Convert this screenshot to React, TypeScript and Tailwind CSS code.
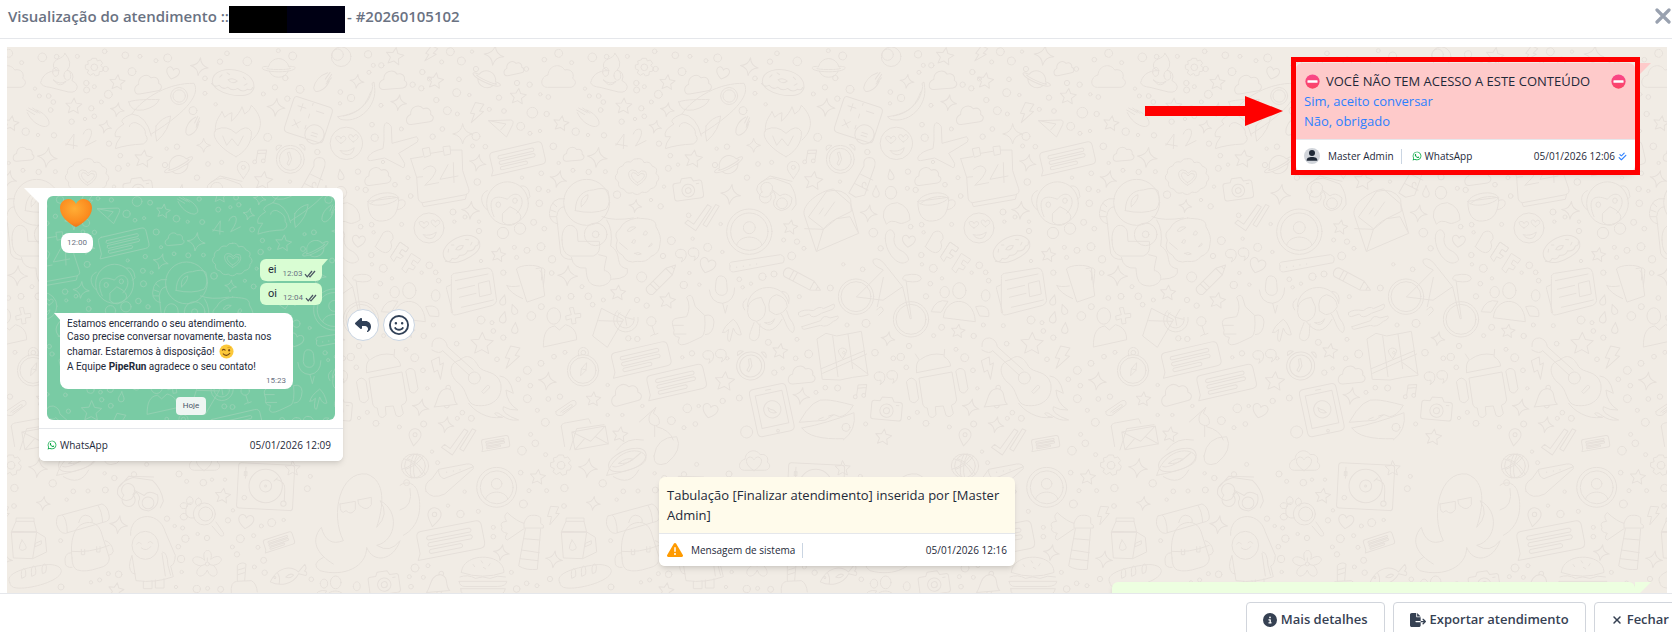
import { useState } from "react";
import type { ReactNode } from "react";
import { FaCheckDouble, FaCircleInfo, FaFileExport, FaRegFaceSmile, FaReply, FaTriangleExclamation, FaWhatsapp, FaXmark } from "react-icons/fa6";

// doodle wallpaper: small reusable outlines, centred on 0,0
const shapes = {
  star: "M0-25L7-10L24-8L11 4L15 20L0 12L-15 20L-11 4L-24-8L-7-10Z",
  sparkle: "M0-30Q4-4 30 0Q4 4 0 30Q-4 4-30 0Q-4-4 0-30Z",
  cloud: "M-35 32C-58 32-55 0-32-5C-30-35 5-42 18-20C38-25 48-8 42 5C58 15 48 32 35 32Z",
  heart: "M0 22C-32 2-25-19-11-19C-3-18 0-10 0-10C0-10 3-18 11-19C25-19 32 2 0 22Z",
  drop: "M0-18C3-8 10 0 10 7A10 10 0 0 1-10 7C-10 0-3-8 0-18Z",
  bolt: "M-8-30L18-28L8-6L20-6L-12 32L-6 4L-18 4Z",
  planet: "M-32-5A33 33 0 0 1 32-5M-30 10A33 33 0 0 0 30 10M-32-5C-66-8-60 12 0 12C60 12 66-8 32-5M-34 0C-50 2-20 5 0 5C20 5 50 2 34 0",
  bubble: "M-68-35H70Q84-35 84-21V21Q84 35 70 35H-88L-80 20V-21Q-80-35-68-35ZM-53-20H53Q60-15 53-10H-53Q-60-15-53-20ZM-53-3H53Q60 2 53 7H-53Q-60 2-53-3ZM-53 14H25Q32 19 25 24H-53Q-60 19-53 14Z",
  face: "M45 0A45 45 0 1 1-45 0A45 45 0 1 1 45 0ZM-15 0C-33-10-32-20-24-20Q-16-20-15-13Q-10-24-3-18C2-12-4-6-15 0ZM19-4C3-14 4-24 12-24Q18-24 19-17Q24-28 31-22C36-16 30-10 19-4ZM-17 20Q4 26 22 12Q18 32 2 32Q-12 31-17 20Z",
  donut: "M-60 5C-65-30-20-45 20-38C60-30 75 0 60 20C40 45-50 40-60 5ZM-62 10Q-50 22-38 12Q-25 26-12 14Q5 26 18 14Q35 26 48 12Q60 16 62 5M-14-8Q0-18 14-8Q0 6-14-8ZM-40-12L-34-20M-20-28L-12-24M30-22L38-16M36 2L44-4",
  comet: "M-32-22L-8-8M-26-28L0-14M-14-28L8-12M-30-14C-20 8 0 26 24 28Q42 24 32 6C26-6 10-18-2-22",
  camera: "M-38-22H-22L-16-34H14L20-22H38Q46-22 46-14V26Q46 34 38 34H-38Q-46 34-46 26V-14Q-46-22-38-22ZM20 6A20 20 0 1 1-20 6A20 20 0 1 1 20 6ZM9 6A9 9 0 1 1-9 6A9 9 0 1 1 9 6ZM28-12H36",
  badge: "M68 0A68 68 0 1 1-68 0A68 68 0 1 1 68 0ZM56 0A56 56 0 1 1-56 0A56 56 0 1 1 56 0ZM18-12A18 18 0 1 1-18-12A18 18 0 1 1 18-12ZM-38 40C-30 8 30 8 38 40",
  checks: "M-52 12L-42 4L-26 18L22-36L32-28L-22 38ZM2 22L46-34L56-28L12 30Z",
  quotes: "M-18-14A13 13 0 1 0-14 10Q-10 16-16 24Q2 14-2-4Q-6-15-18-14ZM20-18A13 13 0 1 0 24 6Q28 12 22 20Q40 10 36-8Q32-19 20-18Z",
  clock: "M42 0A42 42 0 1 1-42 0A42 42 0 1 1 42 0ZM33 0A33 33 0 1 1-33 0A33 33 0 1 1 33 0ZM-8-20L-2-22L4 0L-4 18L-10 14L-4 0ZM-42-28Q-48-46-26-42ZM28-44Q46-48 44-28Z",
  pencil: "M-52-14H30L58 0L30 14H-52Q-60 10-60 0Q-60-10-52-14ZM-36-14V14M-24-14V14M30-14V14M46-6V6",
  gear: "M-6-27H6L9-19L18-22L25-12L19-6L27 2L24 12L15 13L14 23L3 26L-2 18L-12 24L-21 17L-17 9L-27 4L-27-7L-18-9L-20-19L-10-22ZM10 0A10 10 0 1 1-10 0A10 10 0 1 1 10 0Z",
  note: "M-12 16A6 6 0 1 1-13 15V-18L14-24V8A6 6 0 1 1 13 7M-12-8L14-14",
  pin: "M0 26C-10 10-18 4-18-8A18 18 0 0 1 18-8C18 4 10 10 0 26ZM6-8A6 6 0 1 1-6-8A6 6 0 1 1 6-8Z",
  clip: "M-32 10L16-22Q30-26 28-10L-14 22Q-36 26-32 10ZM-18 12L12-10Q20-12 16-4L-12 14",
  bell: "M-6-30A7 7 0 1 1 6-30M-34 30C-24 14-32-28 0-30C26-28 16 2 34 12ZM-4 24Q6 34 12 18",
  flower: "M-8-12C-22-50 22-50 10-14C40-38 60-4 18 4C48 34 10 52 0 18C-18 56-50 26-18 6C-62 0-44-40-8-12ZM6 0A6 6 0 1 1-6 0A6 6 0 1 1 6 0ZM0-8V-18M8 2L18 4M-8 2L-18 5",
  people: "M14-56A20 24 0 1 1-26-56A20 24 0 1 1 14-56ZM-64-52A14 17 0 1 1-64-51ZM60-42A13 17 0 1 1 60-41ZM-54 24C-48-40 38-44 42 36ZM-90 6Q-76-34-40-24L-60 8ZM44-8C74-16 86 0 82 22L56 20Z",
  cup: "M-48-20C-50 20-30 42-4 38C30 36 44 10 44-32ZM-48-20C-40-46 30-58 44-32C30-10-40 0-48-20ZM46-24C70-34 72 0 40 4M-40-14C-20-34 20-40 40-32",
  burger: "M-58-4C-56-60 58-60 58-4Q0 16-58-4ZM-62 8Q-40 0-20 12Q0 4 20 12Q40 2 62 8M-64 20H66Q64 34 40 34H-48Q-64 34-64 20ZM-60 40H62Q58 60 30 60H-40Q-60 58-60 40ZM-26-26L-22-20M-4-36L0-30M20-28L16-22M2-18L8-14",
  bread: "M-76 20C-90-4-46-22 20-32C60-40 88-26 76-6C60 20-20 40-56 36Q-74 34-76 20ZM-40 6Q-44-20-34-22Q-26-22-28 0ZM-10 0Q-14-28-4-30Q4-30 2-6ZM22-8Q18-32 28-36Q38-34 32-12Z",
  milk: "M-40-24L-26-56H28L36-24ZM-26-56V-66H28V-56M-40-24L-34 54L24 56L36-24ZM36-24L62-8L66 36L24 56M-8 0C0 12 6 18 4 26Q-8 36-16 26Q-16 14-8 0ZM32 10L50 2V12L32 20Z",
  backpack: "M-50 60C-56 10-46-40-6-46C20-50 34-34 40-10L62 60Q62 84 30 90Q-10 104-34 96Q-50 90-50 60ZM-52 40Q0 46 62 22M-22 34V50H-12V34M24 26V42H34V26M-52 44Q-76 44-70 78Q-66 90-50 88M50 8Q70 14 74 40Q70 52 60 52M-92-66L40-102Q58-96 62-66Q64-54 54-50L-70-14Q-88-14-96-40Q-98-60-92-66ZM-78-68Q-66-60-64-16M28-98Q40-80 42-46M-30-46Q-22-76 0-66Q14-60 10-46",
  bear: "M-44-30C-50-96 40-110 60-40L90 30Q88 60 76 62L84 94Q30 114-28 106L-40 30Q-56 70-38 84L-30 86M40 0A40 42 0 1 1-40 0A40 42 0 1 1 40 0ZM-26-4Q-18-14-12-4M8-8Q16-16 22-6M-12 8Q4 20 16 4M52 20Q66 20 68 60L76 90M50 24L60 92M-6 108V130H20V106M30 104V128H56V100",
  tablet: "M-44-70H40Q54-70 54-56V60Q54 74 40 74H-44Q-58 74-58 60V-56Q-58-70-44-70ZM-42-50H40V50H-42ZM26 0A26 26 0 1 1-26 0A26 26 0 1 1 26 0ZM-8-60H8M4 62A4 4 0 1 1 3 62M-12-8Q-14 12 10 12L4 4L-4 0Z",
  turntable: "M-76-66H76Q84-66 84-58V62Q84 70 76 70H-76Q-84 70-84 62V-58Q-84-66-76-66ZM50 0A50 50 0 1 1-50 0A50 50 0 1 1 50 0ZM18 0A18 18 0 1 1-18 0A18 18 0 1 1 18 0ZM3 0A3 3 0 1 1-3 0A3 3 0 1 1 3 0ZM30-22Q60-16 58 10V44M24-16L34-26M-62-54V-20M-66-40H-58V-28H-66ZM64 50A8 8 0 1 1 48 50A8 8 0 1 1 64 50Z",
  fish: "M-56 16C-30-24 10-26 32-2L54-22Q60-8 50-2Q62 4 52 12L32 4C10 34-30 34-56 16ZM-30-6Q-24 8-30 24M-40 2A3 3 0 1 1-41 2M-8 8Q8-4 16 6Q4 16-8 8Z",
  hotdog: "M-110 20C-120-30-20-66 40-56C90-50 100-10 60 20C20 50-90 60-110 20ZM-90 14C-60 30 20 0 60-30",
  basketball: "M36 0A36 36 0 1 1-36 0A36 36 0 1 1 36 0ZM-28-22Q10-10 26 26M-34 10Q0 0 20-30M-6 36Q-16 0 2-36",
  mail: "M-60-30H60V34H-60ZM-60-30L0 14L60-30M-60 34L-18 0M60 34L18 0",
  letter: "M-78 0C-84-30-30-70 10-75L62-30L86 58L-40 112ZM-64 8L-10-68Q40-80 62-44L64-8L20 14Q-10 30-18 44ZM-76 44L-20 46L20 14L60 8L86 58M-20 46L-40 112M-32 0L-20-18M-16 6L14-36",
  map: "M-76-50L-50-66L-18-58L56-72L76 60L30 66L-8 74L-60 72ZM-30-58L-14 64M16-64L30 40M-64 40L66-14M-60 54L72-4M30 22L76 56M0 10C-8-2-14-8-12-16Q-2-28 12-16Q12-6 0 10ZM4-12A4 4 0 1 1 3-12",
  keypad: "M-60-62H50Q66-62 66-46V50Q66 62 50 62H-56Q-70 62-70 46V-50Q-70-62-60-62ZM-36-46V-20M-50-34H-22M14-36H40M-48 14L-26 36M-26 14L-48 36M-4-62V-50M-4-20V-6M-4 20V32M64 40A32 32 0 1 1 0 40A32 32 0 1 1 64 40ZM22 36H42M22 46H42",
  sunglasses: "M-10-46Q-60-40-60-10Q-50 18-26 10L-10-6Q2 12-8 20Q-16 44 14 52Q46 46 46 14Q26-6 10 8L-14-12M-10-46L40-28Q60 0 58 34L46 50M-44-4A18 18 0 1 1-20 0A18 18 0 1 1-44-4ZM0 32A16 16 0 1 1 32 28A16 16 0 1 1 0 32ZM-50-30L-20-52L46-36",
  tube: "M-20 60L-42 50L-8-36Q-16-60 4-64Q26-66 24-40L6 50ZM-28 20L14 34M-14-10L24 2M-4 26A6 8 0 1 1 6 20",
  octopus: "M-40 90C-90 60-110 20-76-20Q-60 40-10 20C-50-60-20-190 60-180C120-160 110-80 90-20Q130-60 100-100C160-70 150 20 90 34Q130 60 160 20C140 80 80 90 60 40C60 100-10 130-80 110Q-110 90-70 70M-20-90L26-98V-74Q14-54-2-70Q-20-54-20-90ZM34-102L74-110V-88Q62-68 44-82Q34-86 34-102Z",
  plane: "M-30-10C-30-40-32-56-24-62Q-14-62-8-50L-6 0L68-20Q76-12 70-4L14 30L32 60Q32 80 22 70L-28 44L-70 52Q-84 52-76 38Q-66 24-34 16Z",
};

type Shape = keyof typeof shapes;

// name, x, y, scale, rotation
const doodles: [Shape, number, number, number, number][] = [
  ["bolt", 92, 42, 0.8, 20], ["sparkle", 282, 46, 1, 8], ["cloud", 340, 84, 0.6, -12], ["planet", 260, 118, 0.85, 24], ["star", 106, 123, 1, 8],
  ["star", 354, 170, 1, 6], ["cloud", 476, 110, 1, 0], ["gear", 733, 82, 1, 0], ["star", 802, 128, 0.95, 5], ["star", 671, 199, 1, 3],
  ["cloud", 892, 132, 0.8, -10], ["heart", 968, 99, 0.85, 15], ["sparkle", 1048, 80, 0.9, 8], ["donut", 1147, 129, 1, 8], ["planet", 1286, 84, 0.95, 0],
  ["comet", 1418, 124, 0.9, 95], ["keypad", 1377, 240, 0.9, 18], ["sparkle", 1278, 202, 0.9, 6], ["cloud", 58, 224, 0.8, -8], ["bolt", 230, 218, 1, 8],
  ["star", 483, 251, 0.95, 10], ["comet", 562, 232, 1, 0], ["sparkle", 188, 282, 1, 0], ["sparkle", 802, 209, 0.7, 10], ["sparkle", 766, 260, 0.65, 15],
  ["bubble", 351, 355, 0.98, -13], ["cloud", 520, 342, 0.62, -5], ["sparkle", 592, 352, 1, 8], ["sparkle", 233, 368, 0.85, 12], ["sparkle", 475, 417, 0.85, 15],
  ["star", 880, 357, 1.1, 8], ["planet", 986, 374, 0.9, -28], ["sparkle", 1061, 316, 0.7, 0], ["comet", 1028, 256, 0.8, 85], ["note", 1233, 350, 0.95, 10],
  ["clock", 1321, 358, 1, 0], ["face", 1489, 310, 1.08, 0], ["pin", 1180, 390, 1, 0], ["star", 1240, 423, 1.15, 8], ["tube", 1395, 415, 1, 8],
  ["camera", 864, 446, 0.95, -8], ["sparkle", 992, 463, 1, 8], ["sunglasses", 1130, 460, 1, 0], ["letter", 1290, 522, 1, 0], ["face", 87, 564, 1, 0],
  ["sparkle", 212, 511, 0.9, 5], ["donut", 182, 629, 0.92, -28], ["star", 295, 645, 0.9, 10], ["sparkle", 706, 498, 0.65, 8], ["checks", 905, 532, 1, -6],
  ["badge", 1048, 575, 1, 0], ["star", 1171, 562, 0.9, 10], ["sparkle", 1406, 520, 0.85, 8], ["quotes", 860, 642, 1, 0], ["heart", 922, 676, 1.05, 18],
  ["pencil", 786, 716, 1, -45], ["pencil", 1208, 722, 1.05, 28], ["sparkle", 503, 707, 1, 3], ["star", 654, 759, 0.95, 5], ["star", 802, 782, 1, 10],
  ["drop", 310, 780, 0.9, 15], ["drop", 342, 808, 0.9, -20], ["drop", 310, 832, 1, 15], ["drop", 345, 864, 0.95, 5], ["star", 246, 912, 1.4, 2],
  ["bolt", 336, 952, 1.1, 8], ["bolt", 116, 984, 1, -30], ["bubble", 722, 958, 1.05, -13], ["bubble", 828, 1026, 1.05, -13], ["quotes", 942, 946, 1, 0],
  ["clock", 1052, 978, 1, 5], ["star", 1140, 934, 0.95, 8], ["map", 1328, 946, 1, 0], ["sparkle", 1464, 896, 0.7, 10], ["cloud", 1204, 1004, 0.8, -5],
  ["star", 974, 1025, 1.2, 5], ["cloud", 676, 1062, 0.9, -15], ["sparkle", 442, 1023, 0.9, 8], ["clip", 500, 1104, 1, 0], ["star", 580, 1078, 0.9, 5],
  ["heart", 930, 1112, 1, 15], ["sparkle", 1204, 1068, 0.85, 10], ["tablet", 1117, 1108, 1, -12], ["note", 1384, 1054, 0.95, 8], ["camera", 1460, 1106, 1, 5],
  ["quotes", 1456, 1010, 1, 0], ["bell", 140, 1076, 1, 8], ["sparkle", 62, 1102, 0.85, 12], ["sparkle", 138, 1154, 0.8, 12], ["star", 660, 1184, 0.95, 8],
  ["people", 1684, 808, 1, 0], ["cup", 1602, 505, 1, 0], ["plane", 1632, 310, 1, 0], ["cloud", 1628, 120, 0.82, -5], ["star", 1634, 50, 1.1, 10],
  ["sparkle", 1521, 124, 0.7, 8], ["sparkle", 1646, 188, 0.8, 8], ["cloud", 1582, 408, 0.78, -8], ["drop", 1472, 404, 0.9, -10], ["star", 1674, 874, 0.85, 8],
  ["heart", 1526, 603, 0.85, 8], ["drop", 1428, 455, 1, 0], ["badge", 290, 1342, 0.88, 0], ["checks", 175, 1205, 1, -6], ["basketball", 50, 1278, 1, 0],
  ["pin", 44, 1192, 1, 8], ["gear", 483, 1276, 1.15, 0], ["star", 413, 1312, 0.95, 6], ["sparkle", 564, 1284, 0.95, 8], ["bubble", 286, 1210, 0.5, -10],
  ["mail", 570, 1192, 0.85, -10], ["pin", 102, 1432, 1.1, 10], ["bubble", 150, 1500, 1.2, -11], ["sparkle", 304, 1538, 0.8, 10], ["sparkle", 462, 1558, 0.85, 8],
  ["bolt", 460, 1426, 0.9, 0], ["burger", 248, 1602, 1.1, 0], ["bell", 118, 1634, 1, 10], ["bread", 555, 1608, 1, 0], ["milk", 524, 1500, 1, 0],
  ["backpack", 716, 1494, 1, 0], ["bear", 886, 1516, 1, 0], ["flower", 1072, 1572, 1, 0], ["turntable", 1247, 1338, 1, 3], ["star", 1328, 1286, 0.95, 0],
  ["star", 1118, 1368, 0.95, 8], ["heart", 1188, 1444, 1, 8], ["bubble", 1286, 1506, 0.55, -18], ["fish", 1314, 1602, 1, -8], ["octopus", 1490, 1482, 1, 0],
  ["sunglasses", 870, 1360, 1.1, -12], ["sparkle", 806, 1454, 0.9, 8], ["sparkle", 580, 1390, 0.7, 8], ["camera", 1602, 1628, 1, -8], ["people", 1462, 1672, 0.8, 0],
  ["star", 798, 1652, 0.95, 10], ["hotdog", 690, 1262, 0.6, -10], ["basketball", 1690, 1278, 1, 0], ["heart", 1062, 1270, 1, 0],
  ["cloud", 1064, 1262, 0.9, 0], ["star", 1450, 1192, 1, 8],
];

// x, y, r
const dots = [
  [151, 35, 12], [216, 35, 5], [184, 63, 12], [228, 87, 8], [125, 66, 6], [67, 96, 8], [88, 117, 6], [38, 134, 8], [64, 145, 8], [177, 118, 7], [170, 158, 12], [208, 165, 5],
  [109, 180, 8], [142, 212, 12], [172, 222, 6], [268, 208, 6], [312, 213, 7], [351, 129, 8], [389, 134, 8], [379, 87, 7], [297, 173, 8], [397, 218, 16], [440, 222, 8], [421, 163, 5],
  [445, 171, 7], [433, 59, 7], [476, 40, 12], [515, 68, 6], [577, 52, 13], [620, 50, 7], [682, 49, 6], [764, 34, 7], [826, 46, 10], [870, 49, 6], [767, 87, 8], [846, 95, 12],
  [953, 54, 12], [918, 62, 6], [709, 129, 8], [710, 150, 9], [733, 140, 6], [775, 163, 12], [555, 146, 5], [568, 168, 6], [596, 168, 7], [610, 186, 7], [602, 210, 7], [724, 205, 8],
  [754, 186, 6], [665, 245, 8], [705, 237, 5], [733, 229, 7], [612, 286, 8], [564, 285, 5], [527, 275, 11], [362, 259, 12], [390, 280, 6], [420, 273, 5], [127, 267, 7], [98, 290, 8],
  [228, 289, 12], [218, 318, 6], [256, 320, 7], [4, 267, 6], [460, 319, 10], [476, 369, 5], [519, 391, 6], [566, 396, 8], [616, 395, 6], [366, 413, 5], [424, 400, 7], [232, 426, 10],
  [416, 447, 8], [445, 453, 5], [24, 413, 6], [32, 468, 7], [159, 516, 9], [195, 531, 6], [163, 545, 5], [237, 545, 5], [237, 573, 8], [418, 490, 10], [401, 547, 9], [433, 566, 7],
  [343, 622, 6], [381, 631, 9], [423, 620, 12], [350, 652, 6], [456, 658, 11], [243, 663, 5], [88, 676, 10], [65, 698, 5], [107, 697, 7], [116, 722, 7], [5, 553, 6], [310, 698, 8],
  [455, 699, 7], [546, 740, 6], [475, 774, 7], [513, 769, 9], [565, 769, 10], [578, 794, 7], [610, 780, 6], [424, 800, 9], [394, 828, 13], [1131, 40, 7], [1192, 64, 13], [1285, 32, 6],
  [1328, 48, 12], [1110, 65, 8], [1065, 115, 7], [1065, 160, 6], [1029, 212, 12], [1097, 193, 5], [1240, 162, 6], [1275, 142, 8], [1306, 114, 8], [1350, 148, 12], [1312, 176, 8], [1253, 292, 12],
  [950, 326, 5], [981, 320, 8], [945, 375, 8], [811, 347, 7], [777, 311, 8], [834, 374, 5], [805, 385, 9], [792, 440, 5], [651, 464, 11], [782, 499, 8], [753, 480, 5], [866, 526, 7],
  [814, 602, 12], [789, 648, 8], [878, 596, 5], [962, 552, 5], [967, 636, 5], [923, 622, 12], [851, 735, 11], [898, 734, 5], [868, 699, 5], [725, 711, 15], [740, 797, 8], [711, 780, 8],
  [1018, 718, 7], [1053, 731, 5], [1028, 742, 5], [1087, 710, 11], [1122, 702, 9], [1175, 648, 12], [1212, 625, 6], [1191, 605, 8], [1151, 600, 6], [1041, 413, 8], [1074, 372, 7], [1115, 367, 6],
  [1402, 336, 8], [1320, 425, 5], [1420, 578, 13], [1442, 625, 8], [1388, 688, 7], [1330, 673, 5], [1291, 744, 9], [1198, 770, 6], [1105, 907, 9], [1191, 898, 6], [1187, 955, 7], [1226, 942, 12],
  [1123, 998, 8], [1148, 985, 5], [1425, 938, 10], [1480, 955, 7], [1341, 855, 6], [1398, 850, 12], [982, 955, 5], [876, 940, 8], [847, 952, 5], [685, 895, 8], [712, 897, 8], [623, 1035, 5],
  [423, 970, 9], [462, 950, 7], [495, 937, 6], [382, 991, 12], [355, 1018, 7], [391, 1037, 7], [382, 1076, 12], [412, 1111, 6], [480, 1070, 8], [445, 1077, 7], [436, 1147, 12], [291, 958, 7],
  [170, 911, 7], [71, 888, 8], [44, 953, 12], [69, 991, 7], [18, 928, 6], [82, 1045, 5], [100, 855, 6], [160, 857, 6], [243, 840, 12], [276, 848, 6], [280, 873, 7], [310, 893, 8],
  [187, 1118, 7], [214, 1135, 9], [172, 1135, 6], [71, 1152, 9], [814, 1142, 12], [862, 1105, 13], [896, 1098, 5], [968, 1083, 8], [1018, 1074, 9], [727, 1098, 5], [852, 1163, 6], [886, 1152, 7],
  [623, 1125, 5], [667, 1125, 5], [1248, 1057, 6], [1276, 1043, 7], [1313, 1044, 9], [1397, 1152, 6], [1338, 1162, 12], [1040, 1176, 18], [1554, 43, 11], [1570, 76, 6], [1557, 97, 6], [1471, 156, 7],
  [1503, 174, 11], [1470, 190, 5], [1593, 196, 6], [1566, 254, 7], [1574, 293, 11], [1599, 366, 5], [1524, 395, 8], [1522, 445, 6], [1547, 450, 8], [1635, 434, 7], [1532, 560, 7], [1565, 554, 7],
  [1571, 577, 5], [1564, 645, 8], [1566, 673, 5], [1600, 685, 12], [1626, 715, 5], [1591, 731, 7], [1578, 769, 8], [1625, 862, 9], [1601, 887, 6], [1527, 918, 8], [1502, 951, 11], [1519, 982, 7],
  [1552, 1117, 6], [1578, 1150, 9], [1527, 1134, 5], [1648, 1161, 6], [1594, 76, 8], [366, 1232, 13], [406, 1210, 10], [362, 1298, 7], [437, 1244, 6], [392, 1183, 6], [113, 1268, 6], [96, 1235, 5],
  [370, 1392, 12], [387, 1352, 6], [440, 1352, 6], [493, 1344, 11], [608, 1330, 11], [492, 1398, 7], [235, 1414, 6], [181, 1422, 11], [144, 1397, 5], [194, 1355, 5], [20, 1328, 9], [280, 1462, 6],
  [280, 1490, 7], [45, 1584, 12], [84, 1577, 6], [28, 1610, 6], [70, 1612, 6], [33, 1640, 7], [334, 1597, 6], [350, 1647, 10], [380, 1630, 7], [411, 1637, 6], [450, 1617, 8], [764, 1300, 5],
  [793, 1314, 8], [852, 1303, 8], [987, 1302, 9], [890, 1273, 6], [1010, 1324, 6], [1060, 1328, 10], [1086, 1319, 5], [1125, 1319, 5], [1149, 1411, 5], [1134, 1441, 8], [951, 1436, 8], [974, 1458, 5],
  [998, 1464, 6], [1006, 1496, 11], [1043, 1482, 5], [1071, 1494, 8], [985, 1520, 7], [993, 1557, 11], [995, 1596, 5], [1171, 1496, 12], [1147, 1521, 6], [1161, 1543, 8], [1211, 1487, 6], [1265, 1448, 12],
  [1234, 1458, 6], [1301, 1440, 5], [1224, 1522, 6], [1241, 1561, 9], [1244, 1598, 8], [1213, 1581, 6], [1183, 1373, 7], [1372, 1346, 9], [1381, 1309, 6], [1384, 1618, 7], [1040, 1647, 11], [1073, 1645, 6],
  [1112, 1648, 9], [978, 1641, 5], [806, 1603, 10], [775, 1601, 6], [749, 1620, 6], [723, 1627, 5], [633, 1641, 9], [632, 1502, 6], [766, 1350, 9], [714, 1353, 6], [670, 1354, 7], [650, 1379, 5],
];

// one-off drawings, already in wallpaper coordinates
const scenes = [
  // poop
  "M645 40C640 60 610 52 610 78Q612 90 628 92C590 90 576 110 572 128Q576 140 600 142L655 156Q680 160 682 140Q680 128 666 122Q676 98 652 90Q670 70 645 40ZM608 98A9 13 0 1 0 626 94A9 13 0 1 0 608 98ZM642 108A9 13 0 1 0 662 104A9 13 0 1 0 642 108ZM610 120Q630 136 648 124Q640 136 626 134Z",
  // rocket
  "M846 222C880 170 960 128 1032 130C1050 160 1020 210 904 282M1013 168A25 25 0 1 1 962 168A25 25 0 1 1 1013 168ZM1006 168A18 18 0 1 1 969 168A18 18 0 1 1 1006 168ZM836 186C860 176 900 180 928 178Q920 200 880 210Q842 216 836 186ZM918 258Q936 232 962 228Q958 270 920 304Q914 284 918 258ZM846 222Q890 226 904 288M846 222Q800 240 822 252Q790 270 796 290H812Q796 310 796 326Q830 314 880 312Q900 300 886 284Q890 262 858 248Q840 246 838 260",
  // paper plane and 42
  "M266 242L332 240Q342 240 338 254L320 290ZM266 242L318 252L302 270M648 316L672 282L670 326M646 312L682 318M700 282Q706 264 722 268Q732 282 706 318L738 302",
  // heart on fire
  "M1158 350C1100 320 1080 280 1100 268Q1130 254 1158 280Q1190 250 1204 274C1208 310 1180 340 1158 350ZM1096 274C1094 240 1110 230 1116 214L1124 232Q1136 220 1146 218L1144 244Q1170 220 1176 200L1184 222Q1202 212 1204 196C1240 230 1240 270 1206 300M1118 288L1130 316L1146 296L1164 318L1180 288",
  // calendar
  "M32 356L68 350M92 340L128 334M152 330L186 330L188 392L206 446Q210 460 198 464L68 488Q54 486 54 470L50 412L32 356M68 326L88 322L92 346L74 352ZM130 320L150 318L152 342L134 346ZM50 412L68 410M66 488L70 500L196 478L200 462M70 388Q96 366 108 390Q104 410 74 436L116 428M144 374L120 418L174 408M160 368L162 428",
  // monkey
  "M385 490A62 64 0 1 1 260 490A62 64 0 1 1 385 490ZM262 452C240 460 238 490 262 510M362 438Q386 432 390 470L382 478M282 530C260 480 280 460 322 478C350 440 390 480 350 520M302 494A7 8 0 1 1 288 494A7 8 0 1 1 302 494ZM352 482A7 8 0 1 1 338 482A7 8 0 1 1 352 482ZM308 520L330 500Q372 520 360 540Q330 570 308 546ZM326 579A17 17 0 1 1 292 579A17 17 0 1 1 326 579ZM377 566A17 17 0 1 1 343 566A17 17 0 1 1 377 566Z",
  // astronaut
  "M629 487A69 69 0 1 1 491 487A69 69 0 1 1 629 487ZM526 512C526 470 550 450 580 450Q610 440 624 452Q634 490 618 508Q580 524 526 512ZM544 500C540 480 550 468 564 464Q566 480 544 500ZM494 476Q452 470 448 520Q450 548 474 552M494 500Q474 500 470 530L482 640Q490 660 516 658M486 600C484 540 530 550 532 578L534 604H598Q604 640 580 648H510Q486 640 486 600ZM621 583A34 34 0 1 1 553 583A34 34 0 1 1 621 583ZM597 583A10 10 0 1 1 577 583A10 10 0 1 1 597 583ZM514 652Q520 688 558 684C560 720 566 738 600 738C640 734 640 700 616 692Q608 700 620 650L596 644M620 540Q640 570 632 618C670 640 640 680 682 686Q690 716 634 718M606 530Q640 544 700 534M459 490L470 500M452 510L468 516M450 530L468 530",
  // cookie
  "M712 534C740 538 770 534 768 560Q786 590 780 610Q780 640 752 650Q740 668 712 664Q680 672 668 646Q640 632 652 600Q640 580 660 566Q670 540 712 534ZM682 572Q690 556 708 562L690 574ZM730 584Q734 566 742 576Q742 590 730 584ZM696 608Q700 594 706 600Q706 616 696 608ZM658 608L682 628M746 620Q758 602 756 614ZM704 640Q716 634 724 642Q712 648 704 640Z",
  // rosette
  "M712 356Q728 354 732 368Q750 362 756 378Q776 384 768 400Q784 414 770 426Q770 444 752 446Q742 462 726 456Q712 470 698 458Q680 464 672 448Q652 444 656 426Q638 414 652 400Q650 382 668 378Q674 362 692 366Q700 354 712 356ZM712 436C680 418 680 390 698 390Q710 390 714 400Q724 388 736 394C746 410 732 426 712 436ZM712 428C692 414 690 400 700 398Q710 398 714 408Q722 396 732 402C736 412 726 420 712 428Z",
  // BFF, newspaper, jug
  "M1576 620L1600 578Q1618 566 1628 584Q1634 596 1622 606Q1630 624 1614 636Q1600 644 1576 620ZM1622 650L1650 606L1676 624L1668 636L1656 628L1648 640L1660 648",
  "M-28 650L0 606L26 624L18 636L6 628L-2 640L10 648L2 656L-10 650L-18 664ZM6 686L34 640L62 658L54 670L40 660L34 672L46 680L40 690L26 684L18 698Z",
  "M154 714Q152 702 164 700L264 684Q276 686 278 698L290 782Q288 792 278 796L170 824Q158 828 154 816ZM154 734L140 740Q138 742 140 748L158 818M166 722L264 702M172 748L224 736M178 772L228 760M184 802L280 780M236 730L268 722L274 762L240 770Z",
  "M350 686C360 674 410 672 424 684L434 768L382 786ZM408 686Q440 676 434 700L430 740M420 692Q428 692 424 720M358 738Q330 742 320 736Q330 760 368 776",
  // drink, person, compass
  "M604 806L578 888L622 922L670 840ZM596 842L666 844M714 832A37 37 0 1 1 652 812M702 832A26 26 0 1 1 660 818M676 832L654 818M676 832L690 808M676 832L700 838M676 832L680 856M768 844A14 14 0 1 1 740 844A14 14 0 1 1 768 844ZM756 858L764 882L752 888M764 884L774 880",
  "M482 828A20 24 0 1 1 441 828A20 24 0 1 1 482 828ZM430 920C430 880 440 862 464 858L478 870L496 854C520 860 530 876 530 898ZM498 828L514 824L508 804L520 802L524 822L542 820L542 832L526 834L528 850L516 852L514 836L500 840Z",
  "M596 991A47 47 0 1 1 502 991A47 47 0 1 1 596 991ZM588 991A39 39 0 1 1 510 991A39 39 0 1 1 588 991ZM542 1006L544 986L560 968L558 990ZM544 986L558 990M536 948Q530 924 550 922Q570 926 564 946M557 938A7 7 0 1 1 543 938A7 7 0 1 1 557 938Z",
  // mic, password field, shy monkey
  "M948 724Q950 706 964 708Q980 710 980 728L982 750Q980 766 966 766Q948 766 946 748ZM928 750Q932 788 968 790Q1004 784 1004 744M968 790L976 820L982 796M990 678Q984 668 996 666L1142 644Q1158 650 1150 668L1000 696Q986 696 990 678ZM1010 681V683M1030 678V680M1050 674V676M1070 671V673",
  "M1042 800C1044 730 1150 720 1166 790M1040 776Q1020 790 1034 810M1146 754Q1174 756 1166 790M1044 800Q1036 840 1070 844Q1100 836 1096 800L1084 772Q1050 776 1044 800ZM1108 812Q1100 770 1130 764Q1160 772 1162 800Q1150 822 1128 824ZM1062 848C1050 880 1038 900 1064 902C1084 896 1076 870 1080 852M1144 822C1156 840 1160 870 1178 878Q1192 864 1168 834L1160 812M1070 846Q1110 900 1146 838M1094 848Q1116 850 1124 836Q1116 864 1094 848Z",
  // thumb, arrow, sliders
  "M818 856Q812 836 834 834L860 830Q874 800 860 772Q874 756 880 780L886 800L914 826Q918 880 906 890L868 908Q838 922 834 906L838 892Q816 890 822 872ZM818 856H850M822 882H858M916 826Q940 820 942 846Q940 884 916 884M968 878Q970 860 1000 838Q1016 850 1024 884Q1010 890 1000 864L990 904Q978 908 986 868Q976 880 968 878Z",
  "M1196 818Q1210 806 1240 812Q1260 796 1270 806L1302 792Q1308 800 1298 808L1264 820Q1236 840 1228 822L1204 830Q1192 828 1196 818ZM1206 860L1262 842Q1270 822 1290 834L1314 828Q1318 838 1300 844Q1280 864 1262 856L1212 868Q1204 868 1206 860Z",
  // bicycle
  "M1421 770A53 53 0 1 1 1315 770A53 53 0 1 1 1421 770ZM1413 770A45 45 0 1 1 1323 770A45 45 0 1 1 1413 770ZM1586 838A53 53 0 1 1 1480 838A53 53 0 1 1 1586 838ZM1578 838A45 45 0 1 1 1488 838A45 45 0 1 1 1578 838ZM1370 770L1450 690Q1412 674 1420 658Q1440 650 1460 680L1508 740L1450 780ZM1432 800L1450 712M1508 740L1530 836L1534 836L1518 720Q1500 722 1514 706Q1560 696 1564 716Q1560 730 1520 724M1430 810Q1446 790 1450 812L1436 826",
  // phone receiver, robot, guitar
  "M1456 596C1454 566 1480 560 1484 586Q1476 610 1496 628Q1524 640 1526 660C1500 690 1456 640 1456 596ZM1450 530Q1448 490 1492 488Q1530 500 1530 540Q1510 552 1500 550Q1470 536 1460 552ZM1490 458A17 19 0 1 1 1456 458A17 19 0 1 1 1490 458Z",
  "M1550 998Q1546 970 1558 960L1546 942M1550 998L1652 978Q1650 960 1632 950L1634 928M1630 944Q1590 936 1562 958M1558 1014L1656 996L1670 1080Q1668 1092 1654 1096L1660 1120Q1650 1136 1638 1126L1630 1098L1606 1100L1608 1124Q1598 1140 1586 1126L1582 1104Q1570 1104 1568 1090ZM1520 1024Q1534 1004 1548 1024L1556 1076Q1544 1098 1530 1082ZM18 992Q30 978 44 992L54 1046Q44 1068 30 1054Z",
  "M96 920Q94 892 120 894Q140 900 142 920L220 990M96 930Q120 944 128 932L208 1006M241 1014A18 18 0 1 1 205 1014A18 18 0 1 1 241 1014ZM180 960C140 970 150 1010 176 1030C204 1050 196 1090 226 1096C280 1104 310 1070 302 1030C290 990 250 1000 236 980C220 950 200 940 180 960ZM246 1054L262 1036Q272 1036 268 1044L252 1060ZM300 1008Q330 1010 340 1060L318 1050Q320 1090 354 1110Q330 1112 310 1100Q300 1120 356 1140C310 1146 300 1110 284 1120Q290 1132 308 1132C260 1140 220 1110 206 1090",
  // lips, lamp, banana
  "M1198 1146Q1240 1070 1280 1080Q1300 1080 1360 1096Q1340 1130 1318 1130L1302 1124L1276 1140ZM1206 1164Q1280 1150 1362 1118Q1370 1170 1330 1200M1206 1164Q1230 1200 1330 1196M1256 1138L1270 1132M1286 1128L1300 1124",
  "M718 1146L768 1102L760 1120Q780 1130 778 1150Q770 1164 750 1150Q740 1130 760 1110M764 1156V1190M770 1160Q810 1170 820 1200",
  "M1464 230C1530 220 1560 190 1568 140L1566 130L1572 126L1574 142C1580 190 1540 240 1490 240Q1464 240 1464 230ZM1480 228C1530 220 1550 190 1562 156",
  // donut eye, lighthouse, hand, sneaker
  "M1503 50A29 29 0 1 1 1444 50A29 29 0 1 1 1503 50ZM1480 44A17 17 0 1 1 1446 44A17 17 0 1 1 1480 44Z",
  "M372 1450Q380 1426 394 1426Q416 1424 422 1434V1450L430 1456V1464H372V1456ZM376 1466L356 1578Q380 1592 412 1588L422 1466M370 1496L420 1500M364 1530L418 1538M360 1556L414 1562M372 1466L322 1500Q310 1496 322 1480Q300 1476 306 1462Q296 1446 320 1444Q308 1426 322 1418Q350 1444 372 1450",
  "M78 1354Q70 1330 96 1316L116 1288L200 1272Q222 1270 220 1286L134 1362Q96 1380 78 1354ZM116 1288Q114 1310 132 1316L220 1280M140 1296V1298M160 1292V1294M180 1288V1290",
  "M0 1336C20 1320 48 1330 54 1360C66 1400 60 1460 10 1486M0 1410Q40 1400 30 1346",
  // propeller hat, paw and lens
  "M620 1306C640 1240 700 1220 730 1240C760 1270 700 1290 620 1306ZM650 1230Q680 1190 730 1200M762 1248Q770 1190 830 1190Q850 1230 800 1270Q760 1284 762 1248ZM640 1310Q690 1340 716 1290M656 1270Q680 1250 700 1258Q680 1274 656 1270Z",
  "M1096 1422A33 33 0 1 1 1030 1422A33 33 0 1 1 1096 1422ZM1088 1422A20 20 0 1 1 1046 1422A20 20 0 1 1 1088 1422ZM1086 1458L1112 1488Q1124 1490 1120 1478L1098 1446M1024 1388Q1004 1388 1008 1426Q1020 1438 1034 1434M1002 1388A11 9 0 1 1 1001 1388ZM1020 1370A10 12 0 1 1 1019 1370ZM1046 1374A9 12 0 1 1 1045 1374ZM1002 1420A11 10 0 1 1 1001 1420Z",
  // cake with candle, carton
  "M1144 1660Q1140 1626 1160 1624L1204 1622Q1220 1630 1222 1656M1162 1624V1576Q1176 1564 1188 1572L1184 1622M1164 1590L1184 1584M1164 1604L1184 1598M484 1164Q480 1150 500 1148L566 1136L572 1150M484 1160L494 1220M510 1230L530 1166L612 1154",
];

function Wallpaper() {
  return (
    <svg className="absolute inset-0 h-full w-full" aria-hidden="true">
      <defs>
        <g id="doodles" fill="none" stroke="#e6e0da" strokeLinejoin="round" strokeLinecap="round">
          {doodles.map(([name, x, y, s, r], i) => (
            <path key={i} d={shapes[name]} transform={`translate(${x} ${y}) rotate(${r}) scale(${s})`} strokeWidth={3 / s} />
          ))}
          {dots.map(([x, y, r], i) => (
            <circle key={i} cx={x} cy={y} r={r} strokeWidth={3} />
          ))}
          {scenes.map((d, i) => (
            <path key={i} d={d} strokeWidth={3} />
          ))}
        </g>
        <pattern id="wallpaper" patternUnits="userSpaceOnUse" width="550" height="560" patternTransform="translate(393 -7)">
          <g transform="scale(0.33333)">
            <use href="#doodles" />
            <use href="#doodles" x="-1650" />
            <use href="#doodles" x="1650" />
          </g>
        </pattern>
      </defs>
      <rect width="100%" height="100%" fill="url(#wallpaper)" />
    </svg>
  );
}

function NoEntry() {
  return (
    <svg viewBox="0 0 16 16" className="mx-px inline-block size-[15px] shrink-0" role="img" aria-label="Proibido">
      <defs>
        <linearGradient id="noEntry" x1="0" y1="0" x2="0" y2="1">
          <stop offset="0" stopColor="#f9468c" />
          <stop offset="1" stopColor="#fb4463" />
        </linearGradient>
      </defs>
      <circle cx="8" cy="8" r="7.6" fill="url(#noEntry)" />
      <rect x="2.6" y="6.6" width="10.8" height="2.8" rx="0.6" fill="#fff" />
    </svg>
  );
}

function Avatar() {
  return (
    <svg viewBox="0 0 16 16" className="size-4 shrink-0" aria-hidden="true">
      <circle cx="8" cy="8" r="8" fill="#d1d5db" />
      <circle cx="8" cy="5" r="3" fill="#1f2937" />
      <path d="M2.6 12.8C2.6 9.8 4.6 8.9 8 8.9S13.4 9.8 13.4 12.8Z" fill="#1f2937" />
    </svg>
  );
}

function Channel() {
  return (
    <span className="flex items-center gap-[3px]">
      <FaWhatsapp className="size-[10px] text-green-600" />
      WhatsApp
    </span>
  );
}

function Divider() {
  return <span className="h-[15px] w-px bg-slate-300" />;
}

function CardFooter({ children }: { children: ReactNode }) {
  return (
    <div className="flex h-[33px] items-center rounded-b-md border-t border-gray-200 bg-white px-2 text-[10px] text-gray-800">
      {children}
    </div>
  );
}

function Ticks() {
  return (
    <svg viewBox="0 0 12 8" className="h-2 w-3" fill="none" stroke="#4b5563" strokeWidth="1.3" aria-hidden="true">
      <path d="M1 4.2L3.2 6.8L8 1M5.2 6L6 6.8L11 1" />
    </svg>
  );
}

function OutgoingShot({ text, time, tail }: { text: string; time: string; tail?: boolean }) {
  return (
    <div className="relative flex h-[22px] w-[62px] items-center gap-[6px] rounded-md bg-[#d9fdd3] pl-2">
      {tail && <span className="absolute left-[54px] top-0 h-2 w-[14px] bg-[#d9fdd3] [clip-path:polygon(0_0,100%_0,50%_100%,0_100%)]" />}
      <span className="pb-px text-[11px] leading-none">{text}</span>
      <span className="flex items-center gap-[2px] pt-[7px] text-[8px] leading-none text-gray-500">
        {time}
        <Ticks />
      </span>
    </div>
  );
}

function Attachment() {
  return (
    <div className="relative flex h-[224px] flex-col overflow-hidden rounded-md bg-[#7acba5] pt-[3px] font-[Roboto,sans-serif] text-gray-800">
      <svg className="absolute inset-0 h-full w-full opacity-25" viewBox="100 200 950 740" aria-hidden="true">
        <use href="#doodles" />
      </svg>
      <svg viewBox="0 0 32 28" className="relative ml-[13px] h-7 w-8" role="img" aria-label="Coração laranja">
        <defs>
          <radialGradient id="orange" cx="0.45" cy="0.35" r="0.7">
            <stop offset="0" stopColor="#ffae35" />
            <stop offset="0.7" stopColor="#fb8a1e" />
            <stop offset="1" stopColor="#e8701a" />
          </radialGradient>
        </defs>
        <path d="M16 28C11 25.500 0 19 0 9C0 3.500 4 0 8.500 0C12 0 15 2 16 5C17 2 20 0 23.500 0C28 0 32 3.500 32 9C32 19 21 25.500 16 28Z" fill="url(#orange)" />
      </svg>
      <span className="relative ml-[14px] mt-[6px] flex h-5 w-8 items-center justify-center rounded-lg bg-white text-[8px] text-gray-500">12:00</span>
      <div className="relative mr-[13px] mt-[6px] flex flex-col items-end gap-[2px]">
        <OutgoingShot text="ei" time="12:03" tail />
        <OutgoingShot text="oi" time="12:04" />
      </div>
      <div className="relative ml-[13px] mt-2 h-[76px] w-[233px] rounded-lg bg-white px-[7px] pt-1 text-[10px] leading-[15px]">
        <span className="absolute -left-[6px] top-0 h-2 w-[14px] bg-white [clip-path:polygon(0_0,100%_0,100%_100%,50%_100%)]" />
        <p className="leading-[13px]">Estamos encerrando o seu atendimento.</p>
        <p className="leading-[13px]">Caso precise conversar novamente, basta nos</p>
        <p className="flex h-4 items-center gap-1">
          chamar. Estaremos à disposição!
          <svg viewBox="0 0 16 16" className="size-[15px]" role="img" aria-label="Piscadela">
            <circle cx="8" cy="8" r="7.500" fill="#fcc83a" />
            <path d="M3.500 6.500Q5 5 6.600 6.600M4.500 10.500Q8 14 11.500 10" fill="none" stroke="#7a4a12" strokeWidth="1.100" strokeLinecap="round" />
            <ellipse cx="10.800" cy="6.600" rx="1" ry="1.400" fill="#7a4a12" />
            <path d="M9 3.800Q11 2.800 12.600 4.200" fill="none" stroke="#d99720" strokeWidth="0.900" />
          </svg>
        </p>
        <p>
          A Equipe <b>PipeRun</b> agradece o seu contato!
        </p>
        <p className="text-right text-[8px] leading-[13px] text-gray-500">15:23</p>
      </div>
      <span className="relative mt-2 flex h-[18px] w-[30px] items-center justify-center self-center rounded-[4px] bg-[#eef6f3] text-[8px] text-gray-600">Hoje</span>
    </div>
  );
}

function RoundButton({ label, children }: { label: string; children: ReactNode }) {
  return (
    <button
      type="button"
      aria-label={label}
      className="flex size-8 cursor-pointer items-center justify-center rounded-full border border-slate-300 bg-white text-slate-700 hover:bg-gray-50"
    >
      {children}
    </button>
  );
}

function FooterButton({ icon, label, onClick }: { icon: ReactNode; label: string; onClick?: () => void }) {
  return (
    <button
      type="button"
      onClick={onClick}
      className="flex h-9 shrink-0 cursor-pointer items-center gap-1 whitespace-nowrap rounded-[4px] border border-gray-300 bg-white px-4 text-[13px] font-semibold text-gray-700 hover:bg-gray-50"
    >
      {icon}
      {label}
    </button>
  );
}

export default function App() {
  const [open, setOpen] = useState(true);
  if (!open) return null;

  return (
    <div className="flex h-screen flex-col overflow-hidden bg-white font-['Open_Sans','Noto_Sans',sans-serif] text-gray-800">
      <header className="flex h-[39px] shrink-0 items-start justify-between border-b border-gray-200 pl-2 pr-px pt-[6px]">
        <h1 className="flex items-start text-[15px] font-semibold leading-5 text-gray-500">
          Visualização do atendimento ::
          <span className="h-[27px] w-[58px] bg-black" />
          <span className="mr-[2px] h-[27px] w-[58px] bg-[#000014]" />
          - #20260105102
        </h1>
        <button type="button" aria-label="Fechar janela" onClick={() => setOpen(false)} className="cursor-pointer text-gray-400">
          <svg viewBox="0 0 16 16" className="mt-[2px] size-4" fill="none" stroke="currentColor" strokeWidth="3.200" strokeLinecap="round">
            <path d="M2 2L14 14M14 2L2 14" />
          </svg>
        </button>
      </header>

      <main className="relative ml-[7px] mr-[5px] mt-2 min-h-0 flex-1 overflow-hidden bg-[#f1ece5]">
        <Wallpaper />
        <div className="relative flex flex-col gap-4 px-8 pt-4">
          <article className="relative w-[339px] self-end rounded-md bg-[#fecaca] shadow-md">
            <span className="absolute left-full top-0 h-4 w-4 bg-[#fecaca] [clip-path:polygon(0_0,100%_0,0_100%)]" />
            <div className="p-2 text-[13px] leading-5">
              <p className="flex items-center gap-[5px] whitespace-nowrap">
                <NoEntry />
                <span className="flex-1">VOCÊ NÃO TEM ACESSO A ESTE CONTEÚDO</span>
                <NoEntry />
              </p>
              <p className="text-blue-500">Sim, aceito conversar</p>
              <p className="text-blue-500">Não, obrigado</p>
            </div>
            <CardFooter>
              <Avatar />
              <span className="ml-2 mr-[7px]">Master Admin</span>
              <Divider />
              <span className="ml-[10px]">
                <Channel />
              </span>
              <time className="ml-auto">05/01/2026 12:06</time>
              <FaCheckDouble className="ml-[3px] size-[9px] text-blue-500" />
            </CardFooter>
            <span className="absolute -inset-x-[5px] -bottom-[3px] -top-[6px] border-[5px] border-[#ff0000]" />
            <svg viewBox="0 0 138 30" className="absolute right-[352px] top-[33px] h-[30px] w-[138px]" aria-hidden="true">
              <path d="M0 10H100V0L138 15L100 30V20H0Z" fill="#ff0000" />
            </svg>
          </article>

          <div className="flex items-center gap-1">
            <article className="relative w-[304px] rounded-md bg-white shadow-md">
              <span className="absolute right-[289px] top-0 h-[15px] w-[30px] bg-white [clip-path:polygon(0_0,100%_0,100%_100%,50%_100%)]" />
              <div className="p-2">
                <Attachment />
              </div>
              <CardFooter>
                <Channel />
                <time className="ml-auto mr-1">05/01/2026 12:09</time>
              </CardFooter>
            </article>
            <RoundButton label="Responder">
              <FaReply className="size-4" />
            </RoundButton>
            <RoundButton label="Reagir">
              <FaRegFaceSmile className="size-5" />
            </RoundButton>
          </div>

          <article className="w-[356px] self-center rounded-md bg-[#fffbeb] shadow-md">
            <p className="p-2 text-[13px] leading-5">Tabulação [Finalizar atendimento] inserida por [Master Admin]</p>
            <CardFooter>
              <FaTriangleExclamation className="size-4 text-amber-500" />
              <span className="ml-2 mr-[7px]">Mensagem de sistema</span>
              <Divider />
              <time className="ml-auto">05/01/2026 12:16</time>
            </CardFooter>
          </article>

          <article className="relative h-20 w-[523px] self-end rounded-md bg-[#edffe0] shadow-md">
            <span className="absolute left-full top-0 h-4 w-4 bg-[#edffe0] [clip-path:polygon(0_0,100%_0,0_100%)]" />
          </article>
        </div>
      </main>

      <footer className="-mr-[14px] flex h-[39px] shrink-0 justify-end gap-2 border-t border-gray-200 pt-2">
        <FooterButton icon={<FaCircleInfo className="size-[14px]" />} label="Mais detalhes" />
        <FooterButton icon={<FaFileExport className="size-4" />} label="Exportar atendimento" />
        <FooterButton icon={<FaXmark className="size-3" />} label="Fechar" onClick={() => setOpen(false)} />
      </footer>
    </div>
  );
}
